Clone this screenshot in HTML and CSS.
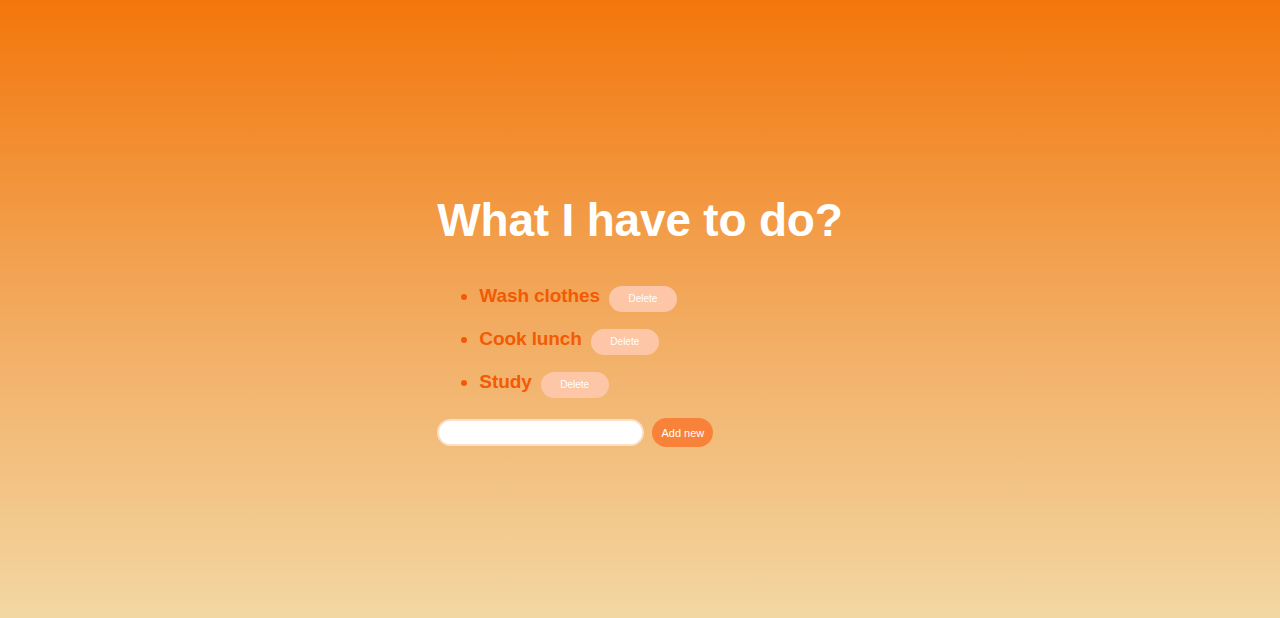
FILE: index.html
```html
<!DOCTYPE html>
<html lang="en">
<head>
<meta charset="utf-8">
<title>Todo</title>
<link rel="stylesheet" href="styles.css">
</head>
<body>
<main class="app">
  <h1 class="title">What I have to do?</h1>
  <ul class="list">
    <li class="item"><span class="item-text">Wash clothes</span><button class="delete">Delete</button></li>
    <li class="item"><span class="item-text">Cook lunch</span><button class="delete">Delete</button></li>
    <li class="item"><span class="item-text">Study</span><button class="delete">Delete</button></li>
  </ul>
  <form class="add-form">
    <input class="add-input" type="text">
    <button class="add-btn" type="button">Add new</button>
  </form>
</main>
</body>
</html>
```

FILE: styles.css
```css
html, body {
  margin: 0;
  height: 100%;
}
body {
  background: linear-gradient(180deg, #f3760a 0%, #f29a45 35%, #f2b36c 60%, #f3d7a2 100%);
  font-family: "Liberation Sans", Arial, sans-serif;
  display: flex;
  align-items: center;
  justify-content: center;
}
.app {
  display: flex;
  flex-direction: column;
  align-items: flex-start;
  margin-top: 23px;
}
.title {
  margin: 0;
  color: #ffffff;
  font-size: 46px;
  font-weight: bold;
  letter-spacing: -0.2px;
  line-height: 52px;
}
.list {
  margin: 39px 0 0 0;
  padding-left: 42px;
  color: #f25a05;
}
.item {
  font-size: 19px;
  font-weight: bold;
  height: 43px;
  line-height: 22px;
  letter-spacing: -0.1px;
}
.item-text {
  margin-right: 9px;
}
.delete {
  border: none;
  background: #fcc6a7;
  color: #ffffff;
  font-family: "Liberation Sans", Arial, sans-serif;
  font-size: 10px;
  width: 68px;
  height: 26px;
  border-radius: 13px;
  vertical-align: 0;
  letter-spacing: 0;
}
.add-form {
  display: flex;
  align-items: center;
  gap: 8px;
  margin-top: 4px;
}
.add-input {
  box-sizing: border-box;
  width: 207px;
  height: 27px;
  border: 2px solid #fbe0c8;
  border-radius: 14px;
  background: #ffffff;
  outline: none;
}
.add-btn {
  border: none;
  background: #f8823a;
  color: #ffffff;
  font-family: "Liberation Sans", Arial, sans-serif;
  font-size: 11px;
  width: 61px;
  height: 29px;
  border-radius: 15px;
}
```
